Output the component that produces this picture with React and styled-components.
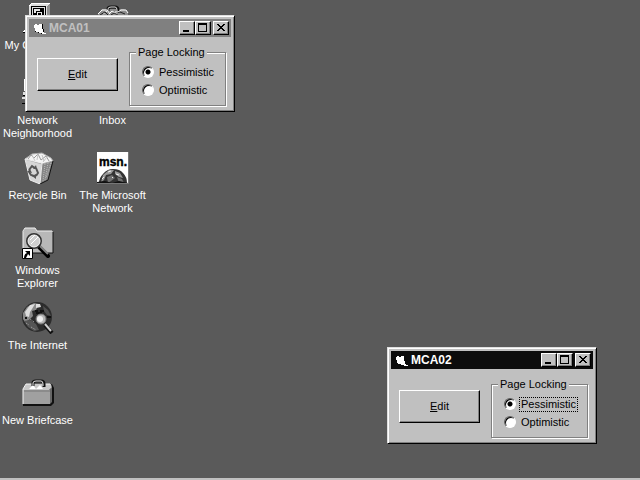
import React, { useState } from "react";
import styled, { createGlobalStyle } from "styled-components";

const GlobalStyle = createGlobalStyle`
    body {
        margin: 0;
        background: #5a5a5a;
    }
    * {
        box-sizing: border-box;
    }
    button,
    input,
    fieldset,
    legend {
        font: inherit;
        color: inherit;
        margin: 0;
        padding: 0;
    }
`;

const Page = styled.div`
    display: flex;
    flex-direction: column;
    height: 100vh;
    overflow: hidden;
    font-family: "Liberation Sans", Arial, sans-serif;
    font-size: 11px;
    line-height: 13px;
    color: #000;
`;

const Desktop = styled.main`
    position: relative;
    flex: 1;
    min-height: 0;
`;

const IconGrid = styled.nav`
    display: grid;
    grid-auto-flow: column;
    grid-template-rows: repeat(6, 75px);
    grid-auto-columns: 75px;
`;

const Shortcut = styled.button`
    display: flex;
    flex-direction: column;
    align-items: center;
    gap: 5px;
    padding-top: 2px;
    border: none;
    background: none;
    color: #fff;
`;

const Picture = styled.svg`
    width: 32px;
    height: 32px;
    flex: none;
`;

const Taskbar = styled.footer`
    height: 2px;
    background: #c0c0c0;
`;

const Window = styled.section`
    position: absolute;
    left: ${(props) => props.$left}px;
    top: ${(props) => props.$top}px;
    width: 210px;
    padding: 3px;
    background: #c0c0c0;
    border: 1px solid;
    border-color: #dfdfdf #000 #000 #dfdfdf;
    box-shadow: inset 1px 1px 0 #fff, inset -1px -1px 0 #808080;
`;

const TitleBar = styled.header`
    display: flex;
    align-items: center;
    height: 18px;
    padding: 0 2px;
    background: ${(props) => (props.$active ? "#0c0c0c" : "#808080")};
    color: ${(props) => (props.$active ? "#fff" : "#c0c0c0")};
`;

const AppIcon = styled.svg`
    width: 16px;
    height: 16px;
    margin-right: 2px;
`;

const Title = styled.h1`
    flex: 1;
    margin: 0;
    font-size: 12px;
    font-weight: bold;
    line-height: 16px;
`;

const CaptionButton = styled.button`
    display: flex;
    width: 16px;
    height: 14px;
    margin-left: ${(props) => (props.$spaced ? 2 : 0)}px;
    background: #c0c0c0;
    border: 1px solid;
    border-color: #fff #000 #000 #fff;
    box-shadow: inset -1px -1px 0 #808080;
`;

const Glyph = styled.svg`
    width: 14px;
    height: 12px;
`;

const Form = styled.form`
    display: flex;
    gap: 11px;
    padding: 9px 5px 2px 8px;
`;

const EditButton = styled.button`
    width: 81px;
    height: 33px;
    margin-top: 12px;
    background: #c0c0c0;
    border: 1px solid;
    border-color: #fff #000 #000 #fff;
    box-shadow: inset -1px -1px 0 #808080;
`;

const Group = styled.fieldset`
    flex: 1;
    min-width: 0;
    height: 60px;
    border: 1px solid #808080;
    box-shadow: 1px 1px 0 #fff, inset 1px 1px 0 #fff;
`;

const Legend = styled.legend`
    margin-left: 6px;
    padding: 0 2px;
    background: #c0c0c0;
`;

const Options = styled.div`
    padding: 4px 0 0 12px;
`;

const Option = styled.label`
    display: flex;
    align-items: center;
    gap: 3px;
    height: 18px;
`;

const Radio = styled.input`
    appearance: none;
    flex: none;
    width: 12px;
    height: 12px;
    border: 1px solid;
    border-color: #606060 #fff #fff #606060;
    border-radius: 50%;
    background: #fff;
    box-shadow: inset 1px 1px 0 #000;
    outline: none;

    &:checked {
        background: radial-gradient(circle, #000 2px, #fff 3px);
    }
`;

const OptionText = styled.span`
    padding: 0 1px;
    border: 1px dotted ${(props) => (props.$focused ? "#000" : "transparent")};
`;

const Computer = () => (
    <Picture viewBox="0 0 32 32" shapeRendering="crispEdges">
        <path d="M7 3l2-2h19v19l-3 3H7z" fill="#dfdfdf" />
        <path d="M25 4l3-3v19l-3 3z" fill="#909090" />
        <path d="M7 3l2-2h19v1H9v2H7z" fill="#fff" />
        <path d="M9 4h15v15H9z" fill="#000" />
        <path d="M10 5h13v13H10z" fill="#dfdfdf" />
        <path d="M11 6h11v11H11z" fill="#000" />
        <path d="M12 7h6v2h-4v2h-2zM15 10h5v1h-5zM15 10h1v5h-1zM19 10h1v5h-1z" fill="#e8e8e8" />
        <path d="M1 29l5-5h22v6H1z" fill="#fff" />
        <path d="M1 30h27v1H1z" fill="#000" />
    </Picture>
);

const Network = () => (
    <Picture viewBox="0 0 32 32" shapeRendering="crispEdges">
        <path d="M2 2h16v12H2z" fill="#fff" />
        <path d="M4 4h11v8H4z" fill="#000" />
        <path d="M1 15h18v3H1zM0 20h10v2H0z" fill="#dfdfdf" />
        <path d="M1 18h18v1H1zM0 26h8v1H0z" fill="#000" />
        <path d="M12 14h17v14H12z" fill="#c0c0c0" />
        <path d="M14 16h12v9H14z" fill="#000" />
    </Picture>
);

const OpenBriefcase = () => (
    <Picture viewBox="0 0 32 32">
        <path d="M1 12l4-5h22l4 3v15l-3 3H1z" fill="#8c8c8c" />
        <path d="M11 9V7q0-2 3-2h4q3 0 3 3v3" fill="none" stroke="#111" strokeWidth="3" />
        <path d="M11 9V7q0-2 3-2h4q2 0 2 3v2" fill="none" stroke="#ddd" />
        <path d="M1 12l4-4h5l3 4M6 12l4-3M12 12l3-3 6 4M18 10h3l3-2h5l2 3" fill="none" stroke="#fff" />
        <path d="M3 13l5-3 3 3M14 13l3-2 4 2M23 10l5 2" fill="none" stroke="#222" />
    </Picture>
);

const Inbox = () => (
    <Picture viewBox="0 0 32 32">
        <path d="M2 12l6-8h16l6 8v14H2z" fill="#c8c8c8" stroke="#fff" />
        <path d="M7 6h17v12H7z" fill="#fff" stroke="#333" />
        <path d="M7 6l9 7 8-7M2 16h8l2 4h8l2-4h8" fill="none" stroke="#333" />
    </Picture>
);

const RecycleBin = () => (
    <Picture viewBox="0 0 32 32">
        <path d="M3 6L8 28l10 4 2-22z" fill="#d6d6d6" />
        <path d="M20 11l11-3-5 20-8 4z" fill="#858585" />
        <path d="M3 7l7-5 10-1 9 5 2 3-11 3z" fill="#f4f4f4" stroke="#aaa" />
        <path d="M6 7l3-4 3 3 4-4 3 6 5-4 3 5" fill="none" stroke="#999" />
        <path d="M10 3l3 6M16 2l-1 6M20 3l2 6M25 5l-4 5" stroke="#c5c5c5" />
        <path d="M3 7l5 21 10 4 2-21z" fill="none" stroke="#eee" />
        <path d="M31 9l-5 19-8 4" fill="none" stroke="#111" />
        <path d="M23 12l-2 17M26 11l-3 17M29 11l-5 15" stroke="#bbb" strokeDasharray="1 1" />
        <path d="M7 18l3-4 3 2M14 16l2 5-2 3M12 24l-3-1-2-3" fill="none" stroke="#555" strokeWidth="2" />
        <path d="M11 17l4 0-1-4zM14 22l-4 2 4 3zM5 20l3-3 2 4z" fill="#555" />
    </Picture>
);

const Msn = () => (
    <Picture viewBox="0 0 32 32">
        <path d="M0 0h32v32H0z" fill="#777" />
        <path d="M0 0h31v31H0z" fill="#fff" />
        <text
            x="2"
            y="14"
            fontFamily="Liberation Sans, Arial, sans-serif"
            fontWeight="bold"
            fontSize="12"
            stroke="#000"
            strokeWidth=".4"
        >
            msn.
        </text>
        <path d="M2 31q0-5 4-9 4-5 10-5 7 0 10 4 4 4 4 10z" fill="#333" />
        <path d="M6 23l6-5 5 0-3 4-5 1-2 5-3 2zM18 19l5 2 3 5-4-1-4-3z" fill="#999" />
        <path d="M10 25l5-2 3 3-4 3-3 2zM20 25l5 2 2 4h-5z" fill="#707070" />
        <path d="M11 20l3-1M5 27l2-2M19 22l3 1M15 25l1 1" stroke="#eee" />
        <path d="M0 30l8-1 7 2 7-2 9 2H0z" fill="#111" />
    </Picture>
);

const Explorer = () => (
    <Picture viewBox="0 0 32 32">
        <path d="M1 5l2-4h10l2 3h16v22H1z" fill="#b8b8b8" />
        <path d="M1 25V4l2-3h10l2 3h15" fill="none" stroke="#f0f0f0" />
        <path d="M31 5v21H2" fill="none" stroke="#111" />
        <path d="M17 20l9 9" stroke="#000" strokeWidth="4" strokeLinecap="round" />
        <path d="M18 19l8 8" stroke="#858585" strokeWidth="2" />
        <circle cx="12" cy="14" r="7" fill="#bbb" stroke="#333" strokeWidth="2" />
        <circle cx="12" cy="14" r="6" fill="#cfcfcf" stroke="#f2f2f2" />
        <path d="M8 13l5-5M9 17l7-7" stroke="#fff" />
        <path d="M.5 21.5h10v10H.5z" fill="#fff" stroke="#000" />
        <path d="M3 24h5v5l-2-2-2 4H2q0-4 3-5z" fill="#000" />
    </Picture>
);

const Internet = () => (
    <Picture viewBox="0 0 32 32">
        <circle cx="15" cy="15" r="15" fill="#2c2c2c" />
        <path d="M1 11l4-6 7-4 5 1-3 6-4 1 1 5-4 4-4 2-2-3z" fill="#8a8a8a" />
        <path d="M3 10l5-7 5-1-3 5-2 3-1 5-3-1zM14 2l4 0 1 3-5 1z" fill="#ddd" />
        <path d="M21 4l5 4 3 6-4-1-3-4z" fill="#505050" />
        <path d="M2 19l6-1 6 4 3 6-5 1-6-4z" fill="#555" />
        <path d="M13 9h3M18 9h4M14 11h6M3 16h2M25 15h4" stroke="#111" strokeWidth="2" />
        <path d="M4 21l3 2M8 17l4 3M9 25l5 3" stroke="#aaa" strokeDasharray="1 1" />
        <path d="M23 23l7 8" stroke="#111" strokeWidth="4" />
        <path d="M23 22l6 7" stroke="#ccc" strokeWidth="2" />
        <circle cx="19" cy="17" r="5" fill="#b5b5b5" stroke="#777" />
        <circle cx="18" cy="17" r="3" fill="#eee" />
    </Picture>
);

const Briefcase = () => (
    <Picture viewBox="0 0 32 32">
        <path d="M1 12l3-5h26l2 4v15l-3 3H1z" fill="#111" />
        <path d="M1 12l3-5h25l1 4-3 2H1z" fill="#c8c8c8" />
        <path d="M1 13h27v14H1z" fill="#a0a0a0" />
        <path d="M28 12l2-2v15l-2 2z" fill="#666" />
        <path d="M1 27V12l3-5h7M21 7h7" fill="none" stroke="#f4f4f4" />
        <path d="M11 9V6q0-2 3-2h5q3 0 3 3v3" fill="none" stroke="#111" strokeWidth="3" />
        <path d="M11 8V6q0-2 3-2h5q2 0 2 3v2" fill="none" stroke="#e8e8e8" />
        <path d="M7 12l4-4 3 4zM14 12l4-4 3 4z" fill="#fff" />
        <path d="M2 14h26" stroke="#777" />
    </Picture>
);

const shortcuts = [
    { name: "My Computer", icon: <Computer /> },
    { name: "Network Neighborhood", icon: <Network /> },
    { name: "Recycle Bin", icon: <RecycleBin /> },
    { name: "Windows Explorer", icon: <Explorer /> },
    { name: "The Internet", icon: <Internet /> },
    { name: "New Briefcase", icon: <Briefcase /> },
    // this one sits behind the MCA01 window, only its top edge shows
    { name: "", icon: <OpenBriefcase /> },
    { name: "Inbox", icon: <Inbox /> },
    { name: "The Microsoft Network", icon: <Msn /> },
];

const LockingWindow = ({ title, left, top, active }) => {
    const [locking, setLocking] = useState("Pessimistic");

    return (
        <Window $left={left} $top={top}>
            <TitleBar $active={active}>
                <AppIcon viewBox="0 0 16 16" shapeRendering="crispEdges">
                    {!active && (
                        <path d="M4 12h3v1h3v1h5v-1h-2V9h-1V4h-1v9H9v-1H6v-1H4z" fill="#000" />
                    )}
                    <path d="M3 5h1V4h2v1h2V4h3v5h1v3h1v1h2v1h-4v-1H8v-1H5v-1H4V8H3z" fill="#fff" />
                </AppIcon>
                <Title>{title}</Title>
                <CaptionButton aria-label="Minimize">
                    <Glyph viewBox="0 0 14 12">
                        <path d="M3 8h6v2H3z" />
                    </Glyph>
                </CaptionButton>
                <CaptionButton aria-label="Maximize">
                    <Glyph viewBox="0 0 14 12">
                        <path fillRule="evenodd" d="M2 1h9v9H2zM3 3v6h7V3z" />
                    </Glyph>
                </CaptionButton>
                <CaptionButton aria-label="Close" $spaced>
                    <Glyph viewBox="0 0 14 12" shapeRendering="crispEdges">
                        <path d="M3 2h2v1h1v1h2V3h1V2h2v1h-1v1H9v1H8v1h1v1h1v1h1v1H9V8H8V7H6v1H5v1H3V8h1V7h1V6h1V5H5V4H4V3H3z" />
                    </Glyph>
                </CaptionButton>
            </TitleBar>
            <Form>
                <EditButton type="button">
                    <u>E</u>dit
                </EditButton>
                <Group>
                    <Legend>Page Locking</Legend>
                    <Options>
                        {["Pessimistic", "Optimistic"].map((option) => (
                            <Option key={option}>
                                <Radio
                                    type="radio"
                                    name={title}
                                    checked={locking === option}
                                    onChange={() => setLocking(option)}
                                />
                                <OptionText $focused={active && locking === option}>
                                    {option}
                                </OptionText>
                            </Option>
                        ))}
                    </Options>
                </Group>
            </Form>
        </Window>
    );
};

export default function App() {
    return (
        <Page>
            <GlobalStyle />
            <Desktop>
                <IconGrid>
                    {shortcuts.map((shortcut) => (
                        <Shortcut key={shortcut.name}>
                            {shortcut.icon}
                            <span>{shortcut.name}</span>
                        </Shortcut>
                    ))}
                </IconGrid>
                <LockingWindow title="MCA01" left={25} top={15} />
                <LockingWindow title="MCA02" left={387} top={347} active />
            </Desktop>
            <Taskbar />
        </Page>
    );
}
